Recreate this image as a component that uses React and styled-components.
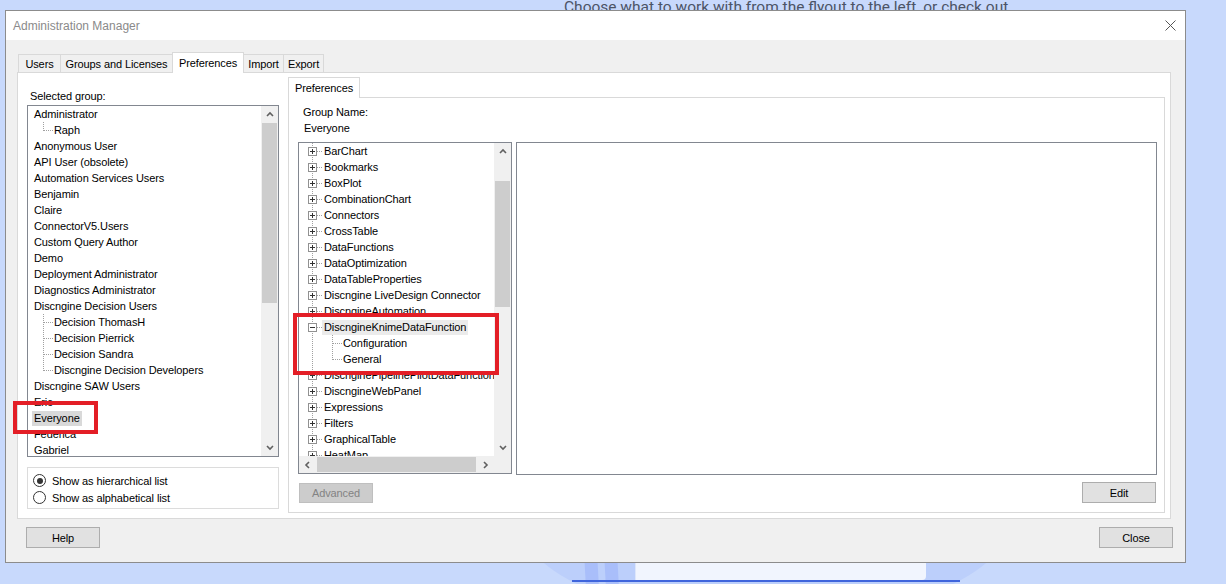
import React from "react";
import styled, { createGlobalStyle } from "styled-components";

const GlobalStyle = createGlobalStyle`
  html, body {
    margin: 0;
    padding: 0;
    background: #c8d9fc;
  }
  body {
    font-family: "Liberation Sans", Arial, sans-serif;
    font-size: 11px;
    letter-spacing: -0.1px;
    color: #000;
  }
`;

const groups = [
  { name: "Administrator" },
  { name: "Raph", child: true, last: true },
  { name: "Anonymous User" },
  { name: "API User (obsolete)" },
  { name: "Automation Services Users" },
  { name: "Benjamin" },
  { name: "Claire" },
  { name: "ConnectorV5.Users" },
  { name: "Custom Query Author" },
  { name: "Demo" },
  { name: "Deployment Administrator" },
  { name: "Diagnostics Administrator" },
  { name: "Discngine Decision Users" },
  { name: "Decision ThomasH", child: true },
  { name: "Decision Pierrick", child: true },
  { name: "Decision Sandra", child: true },
  { name: "Discngine Decision Developers", child: true, last: true },
  { name: "Discngine SAW Users" },
  { name: "Eric" },
  { name: "Everyone", selected: true },
  { name: "Federica" },
  { name: "Gabriel" },
];

const prefs = [
  { name: "BarChart" },
  { name: "Bookmarks" },
  { name: "BoxPlot" },
  { name: "CombinationChart" },
  { name: "Connectors" },
  { name: "CrossTable" },
  { name: "DataFunctions" },
  { name: "DataOptimization" },
  { name: "DataTableProperties" },
  { name: "Discngine LiveDesign Connector" },
  { name: "DiscngineAutomation" },
  { name: "DiscngineKnimeDataFunction", open: true },
  { name: "Configuration", child: true },
  { name: "General", child: true, last: true },
  { name: "DiscnginePipelinePilotDataFunction" },
  { name: "DiscngineWebPanel" },
  { name: "Expressions" },
  { name: "Filters" },
  { name: "GraphicalTable" },
  { name: "HeatMap" },
];

const Desktop = styled.div`
  position: relative;
  width: 1226px;
  height: 584px;
  overflow: hidden;
`;

const FlyoutHint = styled.div`
  position: absolute;
  left: 564px;
  top: -2px;
  font-family: Roboto, "Liberation Sans", sans-serif;
  font-size: 15.5px;
  line-height: 18px;
  letter-spacing: 0;
  color: #4c5466;
  white-space: nowrap;
`;

const Glow = styled.div`
  position: absolute;
  left: 520px;
  top: 420px;
  width: 490px;
  height: 200px;
  border-radius: 50%;
  background: #bccffb;
`;

const Sheet = styled.div`
  position: absolute;
  left: 635px;
  top: 550px;
  width: 290px;
  height: 30px;
  border-radius: 0 0 4px 0;
  background: #f1f5fe;
  border-left: 1px solid #dde6fb;
`;

const Stripe = styled.div`
  position: absolute;
  left: ${(p) => p.$left}px;
  top: 550px;
  width: 13px;
  height: 40px;
  background: #a9befa;
  transform: skewX(3deg);
`;

const BlueLine = styled.div`
  position: absolute;
  left: 572px;
  top: 580px;
  width: 388px;
  height: 2px;
  background: #3f65dc;
`;

const Dialog = styled.div`
  position: relative;
  z-index: 1;
  margin: 10px 0 0 5px;
  width: 1181px;
  height: 553px;
  box-sizing: border-box;
  border: 1px solid #8c8c8c;
  background: #f0f0f0;
  display: flex;
  flex-direction: column;
`;

const TitleBar = styled.div`
  height: 29px;
  flex: none;
  background: #fff;
  display: flex;
  align-items: center;
  justify-content: space-between;
  padding: 0 9px 0 7px;
  color: #8a8a8a;
  font-size: 12px;
  letter-spacing: 0;
`;

const Body = styled.div`
  display: flex;
  flex-direction: column;
  padding: 12px 0 0 11px;
`;

const TabStrip = styled.div`
  display: flex;
  align-items: flex-start;
  height: 21px;
  padding-left: 1px;
`;

const Tab = styled.div`
  position: relative;
  z-index: ${(p) => (p.$active ? 2 : 0)};
  width: ${(p) => p.$w}px;
  height: ${(p) => (p.$active ? 21 : 18)}px;
  margin-top: ${(p) => (p.$active ? 0 : 2)}px;
  margin-left: -1px;
  box-sizing: border-box;
  border: 1px solid #d9d9d9;
  border-bottom: none;
  background: ${(p) => (p.$active ? "#fff" : "#f0f0f0")};
  display: flex;
  align-items: center;
  justify-content: center;
  padding-bottom: ${(p) => (p.$active ? 1 : 0)}px;
  white-space: nowrap;
  &:first-child {
    margin-left: 0;
  }
`;

const TabPanel = styled.div`
  width: 1154px;
  height: 447px;
  margin-top: -1px;
  box-sizing: border-box;
  border: 1px solid #d9d9d9;
  background: #fff;
  display: flex;
  align-items: flex-start;
`;

const LeftCol = styled.div`
  width: 252px;
  margin: 15px 0 0 9px;
  display: flex;
  flex-direction: column;
`;

const FieldLabel = styled.div`
  height: 16px;
  line-height: 16px;
  margin-left: ${(p) => p.$indent || 0}px;
  margin-bottom: ${(p) => p.$gap || 0}px;
  white-space: nowrap;
`;

const ListBox = styled.div`
  height: ${(p) => p.$h}px;
  width: ${(p) => p.$w}px;
  box-sizing: border-box;
  border: 1px solid #828790;
  background: #fff;
  display: flex;
  flex-direction: column;
  flex: none;
`;

const ListArea = styled.div`
  flex: 1;
  display: flex;
  min-height: 0;
`;

const ListItems = styled.div`
  flex: 1;
  min-width: 0;
  overflow: hidden;
`;

const Row = styled.div`
  height: 16px;
  display: flex;
  align-items: center;
  padding-left: ${(p) => p.$pad}px;
  white-space: nowrap;
  & > svg {
    flex: none;
  }
`;

const ItemText = styled.span`
  line-height: 15px;
  padding: 0 2px;
  margin-left: -2px;
  background: ${(p) => p.$bg || "transparent"};
`;

const VScroll = styled.div`
  width: 17px;
  flex: none;
  background: #f0f0f0;
  display: flex;
  flex-direction: column;
`;

const HScroll = styled.div`
  height: 17px;
  flex: none;
  display: flex;
  background: #f0f0f0;
`;

const Arrow = styled.div`
  width: 17px;
  height: 17px;
  flex: none;
  display: flex;
  align-items: center;
  justify-content: center;
`;

const VThumb = styled.div`
  margin: ${(p) => p.$offset}px 1px 0;
  height: ${(p) => p.$size}px;
  background: #cdcdcd;
  flex: none;
`;

const HThumb = styled.div`
  margin: 1px 0 1px ${(p) => p.$offset}px;
  width: ${(p) => p.$size}px;
  background: #cdcdcd;
  flex: none;
`;

const Spacer = styled.div`
  flex: 1;
`;

const Corner = styled.div`
  width: 17px;
  flex: none;
  background: #f0f0f0;
`;

const RadioBox = styled.div`
  margin-top: 10px;
  height: 42px;
  box-sizing: border-box;
  border: 1px solid #dcdcdc;
  padding: 4px 0 0 5px;
`;

const RadioRow = styled.div`
  height: 17px;
  display: flex;
  align-items: center;
  gap: 6px;
`;

const RadioCircle = styled.span`
  width: 13px;
  height: 13px;
  flex: none;
  box-sizing: border-box;
  border: 1px solid #333;
  border-radius: 50%;
  background: #fff;
  display: flex;
  align-items: center;
  justify-content: center;
  &::after {
    content: "";
    width: 6px;
    height: 6px;
    border-radius: 50%;
    background: ${(p) => (p.$on ? "#333" : "transparent")};
  }
`;

const RightCol = styled.div`
  margin: 4px 0 0 9px;
  display: flex;
  flex-direction: column;
  align-items: flex-start;
`;

const InnerPanel = styled.div`
  width: 877px;
  height: 416px;
  margin-top: -1px;
  box-sizing: border-box;
  border: 1px solid #d9d9d9;
  background: #fff;
  padding: 6px 0 0 9px;
  display: flex;
  flex-direction: column;
`;

const ContentRow = styled.div`
  margin-top: 6px;
  display: flex;
  align-items: flex-start;
  gap: 4px;
`;

const DetailBox = styled.div`
  width: 641px;
  height: 333px;
  box-sizing: border-box;
  border: 1px solid #828790;
  background: #fff;
`;

const ButtonRow = styled.div`
  width: 859px;
  display: flex;
  justify-content: space-between;
  align-items: flex-start;
  margin-top: 7px;
`;

const Button = styled.div`
  width: 74px;
  height: ${(p) => (p.$short ? 20 : 21)}px;
  margin: ${(p) => p.$m || "0"};
  box-sizing: border-box;
  border: 1px solid ${(p) => (p.$disabled ? "#bfbfbf" : "#adadad")};
  background: ${(p) => (p.$disabled ? "#cccccc" : "#e1e1e1")};
  color: ${(p) => (p.$disabled ? "#838383" : "#000")};
  display: flex;
  align-items: center;
  justify-content: center;
`;

const Footer = styled.div`
  width: 1147px;
  margin: 8px 0 0 9px;
  display: flex;
  justify-content: space-between;
`;

const Callout = styled.div`
  position: absolute;
  z-index: 3;
  left: ${(p) => p.$x}px;
  top: ${(p) => p.$y}px;
  width: ${(p) => p.$w}px;
  height: ${(p) => p.$h}px;
  box-sizing: border-box;
  border: 4px solid #e31e26;
`;

const Chevron = ({ dir }) => {
  const paths = {
    up: "M1 5 L4 2 L7 5",
    down: "M1 2 L4 5 L7 2",
    left: "M5 1 L2 4 L5 7",
    right: "M2 1 L5 4 L2 7",
  };
  const wide = dir === "up" || dir === "down";
  return (
    <svg width={wide ? 8 : 7} height={wide ? 7 : 8} viewBox={wide ? "0 0 8 7" : "0 0 7 8"}>
      <path d={paths[dir]} fill="none" stroke="#606060" strokeWidth="1.6" />
    </svg>
  );
};

const CloseGlyph = () => (
  <svg width="11" height="11" viewBox="0 0 11 11">
    <path d="M0.5 0.5 L10.5 10.5 M10.5 0.5 L0.5 10.5" stroke="#555" strokeWidth="1" />
  </svg>
);

const dots = { stroke: "#a0a0a0", strokeWidth: 1, strokeDasharray: "1 1", shapeRendering: "crispEdges" };

const GroupBranch = ({ last }) => (
  <svg width="26" height="16" viewBox="0 0 26 16">
    <line x1="15.5" y1="0" x2="15.5" y2={last ? 9 : 16} {...dots} />
    <line x1="16" y1="8.5" x2="25" y2="8.5" {...dots} />
  </svg>
);

const PrefBranch = ({ child, last, open }) => {
  if (child) {
    return (
      <svg width="44" height="16" viewBox="0 0 44 16">
        <line x1="13.5" y1="0" x2="13.5" y2="16" {...dots} />
        <line x1="33.5" y1="0" x2="33.5" y2={last ? 9 : 16} {...dots} />
        <line x1="34" y1="8.5" x2="43" y2="8.5" {...dots} />
      </svg>
    );
  }
  return (
    <svg width="25" height="16" viewBox="0 0 25 16">
      <line x1="13.5" y1="0" x2="13.5" y2="16" {...dots} />
      <line x1="18" y1="8.5" x2="24" y2="8.5" {...dots} />
      <rect x="9.5" y="4.5" width="8" height="8" fill="#fff" stroke="#919191" shapeRendering="crispEdges" />
      <line x1="11" y1="8.5" x2="16" y2="8.5" stroke="#333" shapeRendering="crispEdges" />
      {!open && <line x1="13.5" y1="6" x2="13.5" y2="11" stroke="#333" shapeRendering="crispEdges" />}
    </svg>
  );
};

const tabs = [
  { label: "Users", w: 43 },
  { label: "Groups and Licenses", w: 113 },
  { label: "Preferences", w: 72, active: true },
  { label: "Import", w: 41 },
  { label: "Export", w: 41 },
];

export default function App() {
  return (
    <Desktop>
      <GlobalStyle />
      <FlyoutHint>Choose what to work with from the flyout to the left, or check out</FlyoutHint>
      <Glow />
      <Sheet />
      <Stripe $left={585} />
      <Stripe $left={605} />
      <BlueLine />

      <Dialog>
        <TitleBar>
          <span>Administration Manager</span>
          <CloseGlyph />
        </TitleBar>
        <Body>
          <TabStrip>
            {tabs.map((t) => (
              <Tab key={t.label} $w={t.w} $active={t.active}>
                {t.label}
              </Tab>
            ))}
          </TabStrip>
          <TabPanel>
            <LeftCol>
              <FieldLabel $indent={3} $gap={1}>Selected group:</FieldLabel>
              <ListBox $w={252} $h={352}>
                <ListArea>
                  <ListItems>
                    {groups.map((g) => (
                      <Row key={g.name} $pad={g.child ? 0 : 6}>
                        {g.child && <GroupBranch last={g.last} />}
                        <ItemText $bg={g.selected ? "#d9d9d9" : undefined}>{g.name}</ItemText>
                      </Row>
                    ))}
                  </ListItems>
                  <VScroll>
                    <Arrow><Chevron dir="up" /></Arrow>
                    <VThumb $offset={0} $size={180} />
                    <Spacer />
                    <Arrow><Chevron dir="down" /></Arrow>
                  </VScroll>
                </ListArea>
              </ListBox>
              <RadioBox>
                <RadioRow>
                  <RadioCircle $on />
                  <span>Show as hierarchical list</span>
                </RadioRow>
                <RadioRow>
                  <RadioCircle />
                  <span>Show as alphabetical list</span>
                </RadioRow>
              </RadioBox>
            </LeftCol>

            <RightCol>
              <Tab $w={72} $active>Preferences</Tab>
              <InnerPanel>
                <FieldLabel $indent={5}>Group Name:</FieldLabel>
                <FieldLabel $indent={6}>Everyone</FieldLabel>
                <ContentRow>
                  <ListBox $w={214} $h={332}>
                    <ListArea>
                      <ListItems>
                        {prefs.map((p) => (
                          <Row key={p.name} $pad={0}>
                            <PrefBranch child={p.child} last={p.last} open={p.open} />
                            <ItemText $bg={p.open ? "#ebebeb" : undefined}>{p.name}</ItemText>
                          </Row>
                        ))}
                      </ListItems>
                      <VScroll>
                        <Arrow><Chevron dir="up" /></Arrow>
                        <VThumb $offset={21} $size={126} />
                        <Spacer />
                        <Arrow><Chevron dir="down" /></Arrow>
                      </VScroll>
                    </ListArea>
                    <HScroll>
                      <Arrow><Chevron dir="left" /></Arrow>
                      <HThumb $offset={1} $size={159} />
                      <Spacer />
                      <Arrow><Chevron dir="right" /></Arrow>
                      <Corner />
                    </HScroll>
                  </ListBox>
                  <DetailBox />
                </ContentRow>
                <ButtonRow>
                  <Button $disabled $short $m="1px 0 0 1px">Advanced</Button>
                  <Button $m="0 1px 0 0">Edit</Button>
                </ButtonRow>
              </InnerPanel>
            </RightCol>
          </TabPanel>
          <Footer>
            <Button>Help</Button>
            <Button>Close</Button>
          </Footer>
        </Body>
      </Dialog>

      <Callout $x={13} $y={401} $w={85} $h={33} />
      <Callout $x={293} $y={313} $w={206} $h={62} />
    </Desktop>
  );
}
